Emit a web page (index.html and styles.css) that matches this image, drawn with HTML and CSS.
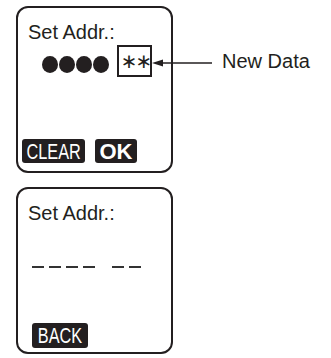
FILE: index.html
```
<!DOCTYPE html>
<html lang="en">
<head>
<meta charset="UTF-8">
<title>Set Addr.</title>
<link rel="stylesheet" href="styles.css">
</head>
<body>
    <div class="screen">
        <div class="title">Set Addr.:</div>
        <div class="data-row">
            <div class="dots">
                <span class="dot"></span>
                <span class="dot"></span>
                <span class="dot"></span>
                <span class="dot"></span>
            </div>
            <div class="new-box">
                <span class="stars">&lowast;&lowast;</span>
                <div class="callout">
                    <svg class="arrow" width="60" height="10" viewBox="0 0 60 10">
                        <polygon points="0,5 11,1.5 11,8.5" fill="#231f20"/>
                        <line x1="10" y1="5" x2="60" y2="5" stroke="#231f20" stroke-width="1.5"/>
                    </svg>
                    <span class="callout-text">New Data</span>
                </div>
            </div>
        </div>
        <div class="keys">
            <div class="key key-clear"><span class="narrow">CLEAR</span></div>
            <div class="key key-ok">OK</div>
        </div>
    </div>

    <div class="screen second">
        <div class="title">Set Addr.:</div>
        <div class="dashes">
            <div class="dash-group">
                <span class="dash"></span>
                <span class="dash"></span>
                <span class="dash"></span>
                <span class="dash"></span>
            </div>
            <div class="dash-group">
                <span class="dash"></span>
                <span class="dash"></span>
            </div>
        </div>
        <div class="keys keys-back">
            <div class="key key-back"><span class="narrow">BACK</span></div>
        </div>
    </div>
</body>
</html>
```

FILE: styles.css
```
body {
    margin: 0;
    padding: 6px 0 0 16px;
    background-color: #fff;
    color: #231f20;
    font-family: "Liberation Sans", Arial, sans-serif;
}
.screen {
    box-sizing: border-box;
    width: 157px;
    height: 167px;
    border: 2px solid #231f20;
    border-radius: 12px;
    display: flex;
    flex-direction: column;
}
.second {
    margin-top: 14px;
}
.title {
    font-size: 20px;
    line-height: 22px;
    padding: 13px 0 0 10px;
}
.data-row {
    display: flex;
    align-items: flex-start;
    margin: 2px 0 0 24px;
}
.dots {
    display: flex;
    gap: 1px;
    margin-top: 11px;
}
.dot {
    width: 16px;
    height: 17px;
    border-radius: 50%;
    background-color: #231f20;
}
.new-box {
    position: relative;
    box-sizing: border-box;
    width: 35px;
    height: 32px;
    margin-left: 8px;
    border: 2px solid #231f20;
    display: flex;
    align-items: center;
    justify-content: center;
}
.stars {
    font-family: "DejaVu Sans", sans-serif;
    font-size: 20px;
    line-height: 20px;
    letter-spacing: -2px;
    margin-right: -2px;
}
.callout {
    position: absolute;
    left: calc(100% + 2px);
    top: 0;
    bottom: 0;
    display: flex;
    align-items: center;
    padding-top: 3px;
}
.arrow {
    display: block;
}
.callout-text {
    margin: -3px 0 0 10px;
    font-size: 20px;
    white-space: nowrap;
}
.keys {
    display: flex;
    gap: 10px;
    margin-top: auto;
    padding: 0 0 8px 4px;
}
.key {
    height: 24px;
    border-radius: 3px;
    background-color: #231f20;
    color: #fff;
    font-size: 22px;
    line-height: 25px;
    display: flex;
    justify-content: center;
    overflow: hidden;
}
.narrow {
    display: inline-block;
    transform: scaleX(0.74);
    white-space: nowrap;
}
.key-clear {
    width: 63px;
}
.key-ok {
    width: 42px;
    font-weight: bold;
}
.dashes {
    display: flex;
    gap: 17px;
    margin: 42px 0 0 14px;
}
.dash-group {
    display: flex;
    gap: 5px;
}
.dash {
    width: 12px;
    height: 1.5px;
    background-color: #333;
}
.keys-back {
    padding: 0 0 4px 14px;
}
.key-back {
    width: 56px;
    height: 25px;
}
```
